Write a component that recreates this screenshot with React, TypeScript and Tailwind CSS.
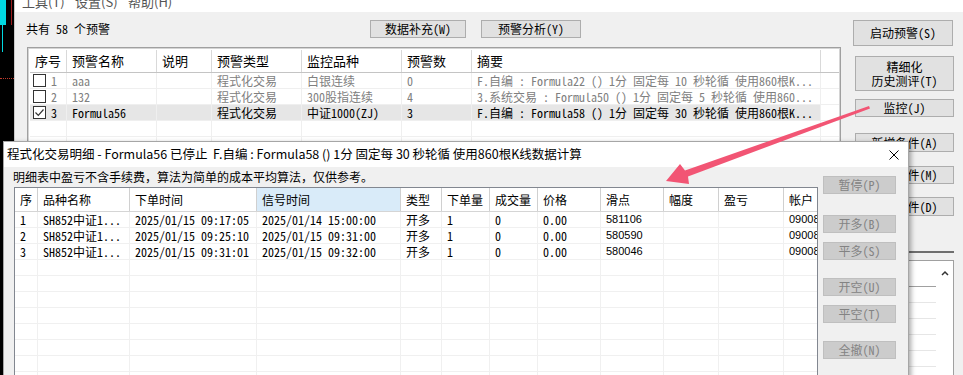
import React from "react";

const M = "font-['Noto_Sans_Mono_CJK_SC','Noto_Sans_CJK_SC',monospace]";
const Y = "font-['Noto_Sans_CJK_SC',sans-serif]";

const BTN =
  "h-[18px] border border-[#adadad] bg-[#e1e1e1] text-[12px] leading-[16px] flex items-center justify-center text-black shrink-0 " +
  M;
const DBTN =
  "h-[18px] w-[73px] border border-[#bfbfbf] bg-[#cccccc] text-[12px] leading-[16px] flex items-center justify-center text-[#838383] shrink-0 " +
  M;

const topCols = [37, 90, 55, 90, 100, 70, 349];
const topHead = ["序号", "预警名称", "说明", "预警类型", "监控品种", "预警数", "摘要"];
const topRows = [
  {
    n: "1",
    name: "aaa",
    type: "程式化交易",
    sym: "白银连续",
    cnt: "0",
    sum: "F.自编 : Formula22 () 1分 固定每 10 秒轮循 使用860根K...",
    dis: true,
    checked: false,
  },
  {
    n: "2",
    name: "132",
    type: "程式化交易",
    sym: "300股指连续",
    cnt: "4",
    sum: "3.系统交易 : Formula50 () 1分 固定每 5 秒轮循 使用860...",
    dis: true,
    checked: false,
  },
  {
    n: "3",
    name: "Formula56",
    type: "程式化交易",
    sym: "中证1000(ZJ)",
    cnt: "3",
    sum: "F.自编 : Formula58 () 1分 固定每 30 秒轮循 使用860根K...",
    dis: false,
    checked: true,
  },
];

const dCols = [23, 92, 127, 144, 41, 48, 48, 63, 63, 55, 65, 80];
const dHead = ["序", "品种名称", "下单时间", "信号时间", "类型", "下单量", "成交量", "价格", "滑点", "幅度", "盈亏", "帐户"];
const dRows = [
  ["1", "SH852中证1...", "2025/01/15 09:17:05", "2025/01/14 15:00:00", "开多", "1", "0", "0.00", "581106", "", "", "090080"],
  ["2", "SH852中证1...", "2025/01/15 09:25:10", "2025/01/15 09:31:00", "开多", "1", "0", "0.00", "580590", "", "", "090080"],
  ["3", "SH852中证1...", "2025/01/15 09:31:01", "2025/01/15 09:32:00", "开多", "1", "0", "0.00", "580046", "", "", "090080"],
];

function CheckBox({ checked }: { checked: boolean }) {
  return (
    <div className="w-[13px] h-[13px] border border-[#333333] bg-white flex items-center justify-center shrink-0">
      {checked && (
        <svg width="11" height="11" viewBox="0 0 11 11">
          <path d="M1.5 5.5 L4.3 8.3 L9.5 2.5" fill="none" stroke="#333" strokeWidth="1.2" />
        </svg>
      )}
    </div>
  );
}

function TopTable() {
  return (
    <div className="ml-[12px] w-[814px] flex-1 border-t border-l border-r border-[#a0a0a0] overflow-hidden">
      <div className="h-full border-t border-l border-r border-[#d4d4d4] bg-white pt-[1px] pl-[1px]">
        <div className={"flex h-[23px] border-b border-[#c4c4c4] bg-white text-[13px] text-black " + Y}>
          {topHead.map((h, i) => (
            <div
              key={i}
              style={{ width: topCols[i] }}
              className="h-full border-r border-[#d9d9d9] pl-[5px] flex items-center whitespace-nowrap overflow-hidden shrink-0"
            >
              {h}
            </div>
          ))}
          <div className="flex-1" />
        </div>
        {topRows.map((r, ri) => {
          const cells = ["", r.name, "", r.type, r.sym, r.cnt, r.sum];
          return (
            <div
              key={ri}
              className={
                "flex h-[16px] border-b border-[#efefef] text-[12px] leading-[15px] " +
                M +
                (r.dis ? " text-[#808080]" : " text-black")
              }
            >
              {cells.map((c, ci) => (
                <div
                  key={ci}
                  style={{ width: topCols[ci] }}
                  className={
                    "h-full border-r border-[#efefef] flex items-center whitespace-nowrap overflow-hidden shrink-0 " +
                    (ci === 0 ? "pl-[3px] gap-[5px]" : "pl-[5px]") +
                    (r.checked ? " bg-[#e6e6e6]" : "")
                  }
                >
                  {ci === 0 ? (
                    <>
                      <CheckBox checked={r.checked} />
                      <span>{r.n}</span>
                    </>
                  ) : (
                    c
                  )}
                </div>
              ))}
              <div className="flex-1" />
            </div>
          );
        })}
        {[0, 1].map((k) => (
          <div key={k} className="flex h-[16px] border-b border-[#efefef]">
            {topCols.map((w, ci) => (
              <div key={ci} style={{ width: w }} className="h-full border-r border-[#efefef] shrink-0" />
            ))}
          </div>
        ))}
      </div>
    </div>
  );
}

function DialogTable() {
  return (
    <div className="w-[804px] h-[200px] border border-[#828790] bg-white overflow-hidden">
      <div className={"flex h-[24px] border-b border-[#d5d5d5] text-[12px] text-black " + Y}>
        {dHead.map((h, i) => (
          <div
            key={i}
            style={{ width: dCols[i] }}
            className={
              "h-full border-r border-[#d0d0d0] pl-[5px] flex items-center whitespace-nowrap overflow-hidden shrink-0 " +
              (i === 3 ? "bg-[#d9ebf9]" : "bg-white")
            }
          >
            {h}
          </div>
        ))}
      </div>
      {dRows.map((r, ri) => (
        <div key={ri} className={"flex h-[16px] border-b border-[#f0f0f0] text-[12px] leading-[15px] text-black " + M}>
          {r.map((c, ci) => (
            <div
              key={ci}
              style={{ width: dCols[ci] }}
              className={
                "h-full border-r border-[#f0f0f0] pl-[5px] flex items-center whitespace-nowrap overflow-hidden shrink-0" +
                (ci === 8 || ci === 11 ? " font-['Liberation_Sans',sans-serif] text-[11px]" : "")
              }
            >
              {c}
            </div>
          ))}
        </div>
      ))}
      {[0, 1, 2, 3, 4, 5, 6, 7].map((k) => (
        <div key={k} className="flex h-[16px] border-b border-[#f0f0f0]">
          {dCols.map((w, ci) => (
            <div key={ci} style={{ width: w }} className="h-full border-r border-[#f0f0f0] shrink-0" />
          ))}
        </div>
      ))}
    </div>
  );
}

export default function App() {
  return (
    <div className="relative w-[963px] h-[375px] overflow-hidden flex bg-black">
      {/* left chart strip */}
      <div className="w-[14px] h-full bg-black flex flex-col shrink-0">
        <div className="flex h-[25px]">
          <div className="w-[6px] bg-[#00d8e0]" />
          <div className="w-[5px]" />
          <div className="w-[1px] bg-[#9b1c1c]" />
        </div>
        <div className="w-[1px] h-[27px] ml-[2px] bg-[#00d8e0]" />
        <div className="mt-[26px] border-t border-dotted border-[#c0392b] w-full" />
      </div>

      {/* main window */}
      <div className="flex-1 flex flex-col bg-[#f0f0f0] border-l border-[#c9c9c9]">
        <div className={"h-[12px] bg-white overflow-hidden flex pl-[7px] text-[13px] text-[#555] shrink-0 " + Y}>
          <div className="w-[53px] leading-[20px] -mt-[8px]">工具(T)</div>
          <div className="w-[53px] leading-[20px] -mt-[8px]">设置(S)</div>
          <div className="w-[53px] leading-[20px] -mt-[8px]">帮助(H)</div>
        </div>

        <div className="flex flex-1 min-h-0">
          {/* left column */}
          <div className="w-[826px] flex flex-col shrink-0">
            <div className="flex items-start pt-[8px] pl-[11px] h-[35px] shrink-0">
              <div className={"w-[344px] leading-[18px] text-[12px] text-black " + M}>共有 58 个预警</div>
              <div className={BTN + " w-[96px]"}>数据补充(W)</div>
              <div className={BTN + " w-[100px] ml-[15px]"}>预警分析(Y)</div>
            </div>
            <TopTable />
          </div>

          {/* right column */}
          <div className="flex-1 flex flex-col">
            <div className={BTN + " ml-[12px] mt-[8px] w-[100px] !h-[26px]"}>启动预警(S)</div>
            <div className={BTN + " ml-[14px] mt-[10px] w-[99px] !h-[35px] flex-col"}>
              <span className="leading-[14px] h-[14px]">精细化</span>
              <span className="leading-[14px] h-[14px]">历史测评(T)</span>
            </div>
            <div className={BTN + " ml-[14px] mt-[8px] w-[99px]"}>监控(J)</div>
            <div className={BTN + " ml-[14px] mt-[16px] w-[99px] !h-[19px]"}>新增条件(A)</div>
            <div className={BTN + " ml-[14px] mt-[14px] w-[99px]"}>修改条件(M)</div>
            <div className={BTN + " ml-[14px] mt-[13px] w-[99px] !h-[19px]"}>删除条件(D)</div>
            <div className="ml-[14px] mt-[35px] w-[99px] h-[2px] bg-[#6f6f6f] shrink-0" />
            <div className="ml-[14px] mt-[7px] w-[99px] flex-1 border border-[#a0a0a0] flex bg-white">
              <div className="flex-1 flex flex-col">
                <div className="h-[26px] border-b border-[#a0a0a0] shrink-0" />
                {[0, 1, 2, 3, 4, 5].map((k) => (
                  <div key={k} className="h-[16px] border-b border-[#e6e6e6] shrink-0" />
                ))}
              </div>
              <div className="w-[17px] flex justify-center pt-[9px]">
                <svg width="8" height="6" viewBox="0 0 8 6">
                  <path d="M1 5 L4 2 L7 5" fill="none" stroke="#333" strokeWidth="1.5" />
                </svg>
              </div>
            </div>
          </div>
        </div>
      </div>

      {/* dialog window */}
      <div className="absolute left-[3px] top-[141px] w-[906px] h-[240px] border border-[#a6a6a6] bg-[#f0f0f0] shadow-[2px_2px_5px_rgba(0,0,0,0.35)] flex flex-col">
        <div className="h-[25px] bg-white flex items-center pl-[3px] pr-[9px] shrink-0">
          <span className={"flex-1 text-[12.5px] text-black whitespace-pre " + Y}>
            程式化交易明细 - Formula56 已停止  F.自编 : Formula58 () 1分 固定每 30 秒轮循 使用860根K线数据计算
          </span>
          <svg width="10" height="10" viewBox="0 0 10 10">
            <path d="M0.5 0.5 L9.5 9.5 M9.5 0.5 L0.5 9.5" stroke="#000" strokeWidth="1" />
          </svg>
        </div>
        <div className="flex pl-[10px]">
          <div className="w-[804px] flex flex-col shrink-0">
            <div className={"h-[20px] leading-[20px] -ml-[1px] text-[12px] text-black " + Y}>
              明细表中盈亏不含手续费，算法为简单的成本平均算法，仅供参考。
            </div>
            <DialogTable />
          </div>
          <div className="ml-[5px] w-[73px] flex flex-col pt-[9px]">
            <div className={DBTN}>暂停(P)</div>
            <div className={DBTN + " mt-[21px]"}>开多(B)</div>
            <div className={DBTN + " mt-[9px]"}>平多(S)</div>
            <div className={DBTN + " mt-[18px]"}>开空(U)</div>
            <div className={DBTN + " mt-[9px]"}>平空(T)</div>
            <div className={DBTN + " mt-[18px]"}>全撤(N)</div>
          </div>
        </div>
      </div>

      {/* red annotation arrow */}
      <svg className="absolute left-0 top-0 pointer-events-none" width="963" height="375" viewBox="0 0 963 375">
        <polygon
          points="666,181 680,164 685,170.5 869,106 870,108.5 688,176.5 689,184"
          fill="#f25574"
        />
      </svg>
    </div>
  );
}
